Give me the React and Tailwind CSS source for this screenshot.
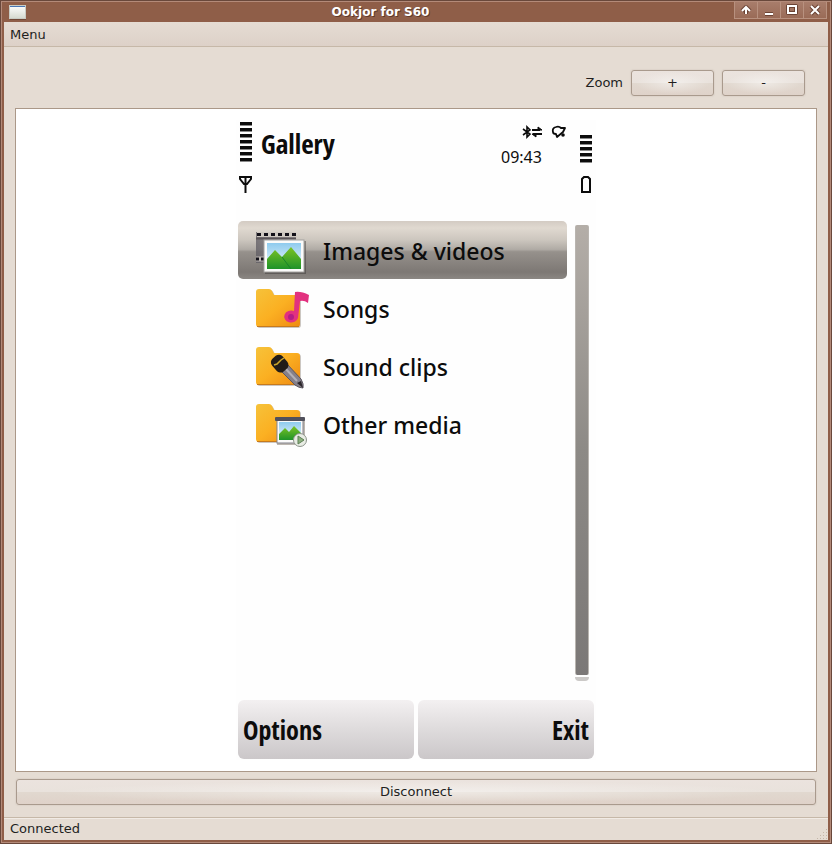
import React from 'react';

const folderTop =
  'M2 8 Q2 5 5 5 H15 Q17 5 18 7 L20 11 H43 Q46 11 46 14 V40 Q46 43 43 43 H5 Q2 43 2 40 Z';

function Gradients() {
  return (
    <svg width="0" height="0" className="absolute" aria-hidden="true">
      <defs>
        <linearGradient id="folder" x1="0" y1="0" x2="1" y2="1">
          <stop offset="0" stopColor="#f6c23a" />
          <stop offset="0.5" stopColor="#fbb022" />
          <stop offset="1" stopColor="#ee8a12" />
        </linearGradient>
        <linearGradient id="sky" x1="0" y1="0" x2="0" y2="1">
          <stop offset="0" stopColor="#8fcbee" />
          <stop offset="1" stopColor="#f2fafc" />
        </linearGradient>
        <linearGradient id="hill" x1="0" y1="0" x2="0" y2="1">
          <stop offset="0" stopColor="#7cc325" />
          <stop offset="1" stopColor="#1f9329" />
        </linearGradient>
        <linearGradient id="film" x1="0" y1="0" x2="1" y2="0">
          <stop offset="0" stopColor="#5d5a61" />
          <stop offset="1" stopColor="#a09a9c" />
        </linearGradient>
        <linearGradient id="pane" x1="0" y1="0" x2="0" y2="1">
          <stop offset="0" stopColor="#ffffff" />
          <stop offset="1" stopColor="#d5d9cf" />
        </linearGradient>
      </defs>
    </svg>
  );
}

function Folder() {
  return (
    <>
      <path d={folderTop} fill="#9a8f86" opacity="0.5" transform="translate(1 1)" />
      <path d={folderTop} fill="url(#folder)" />
      <path d="M3 42.5 H45" stroke="#c77a1c" strokeWidth="1" />
    </>
  );
}

function Icon({ children }) {
  return (
    <svg width="56" height="48" viewBox="0 0 56 48" className="shrink-0" aria-hidden="true">
      {children}
    </svg>
  );
}

function ImagesIcon() {
  return (
    <Icon>
      <rect x="2" y="6" width="40" height="31" fill="url(#film)" opacity="0.75" />
      <path d="M3 8.5 H42" stroke="#cfc9c2" strokeWidth="5" />
      <path d="M3 8.5 H42" stroke="#121018" strokeWidth="3" strokeDasharray="4 3" />
      <path d="M2 12.5 H42" stroke="#5b5558" strokeWidth="2" />
      <path d="M2 33 H10" stroke="#bdb7b2" strokeWidth="5" />
      <path d="M2 33 H10" stroke="#121018" strokeWidth="3" strokeDasharray="3 2" />
      <rect x="11" y="15" width="41" height="33" fill="#3a3735" opacity="0.45" />
      <rect x="10" y="14" width="40" height="32" fill="#fbfbfa" stroke="#a4a29f" strokeWidth="1" />
      <rect x="13" y="17" width="34" height="26" fill="url(#sky)" />
      <path d="M13 33 L21 24 L28 31 L37 21 L47 33 V43 H13 Z" fill="url(#hill)" />
      <path d="M28 31 L31 35 L37 43" stroke="#18832a" strokeWidth="1" fill="none" />
    </Icon>
  );
}

function SongsIcon() {
  return (
    <Icon>
      <Folder />
      <path d="M41 8 Q47 7 55 11 L54 19 Q50 16 46 17 L44 34 A7 6 0 1 1 40 27 Z" fill="#e2317f" />
      <circle cx="37" cy="33" r="3" fill="#b51c86" />
    </Icon>
  );
}

function SoundIcon() {
  return (
    <Icon>
      <Folder />
      <path d="M26 28 L33 22 L47 37 Q50 42 49 46 Q45 46 41 43 Z" fill="#85808a" stroke="#5c5760" strokeWidth="1" />
      <path d="M31 26 L43 39" stroke="#b2afb6" strokeWidth="2" />
      <path d="M43 41 L47 39 L49 46 Z" fill="#2b262b" />
      <g transform="rotate(50 26 22)">
        <rect x="17" y="15" width="17" height="14" rx="5" fill="#211c18" />
      </g>
      <path d="M20 23 L23 22 L27 18 L30 16" stroke="#c9a52b" strokeWidth="1.5" fill="none" />
    </Icon>
  );
}

function MediaIcon() {
  return (
    <Icon>
      <g transform="translate(0 -1)">
        <Folder />
      </g>
      <rect x="23" y="20" width="28" height="25" fill="#7b6f62" opacity="0.5" />
      <rect x="23" y="19" width="26" height="24" fill="#fafafa" stroke="#83838b" strokeWidth="1" />
      <rect x="21" y="17" width="30" height="4" rx="1" fill="#50505c" />
      <rect x="25" y="22" width="22" height="18" fill="url(#sky)" />
      <path d="M25 34 L31 28 L35 32 L40 26 L47 33 V40 H25 Z" fill="url(#hill)" />
      <circle cx="46" cy="40" r="6.5" fill="#e8ece4" stroke="#8d948b" strokeWidth="1" />
      <path d="M44 36 L50 40 L44 44 Z" fill="#8cb07e" stroke="#5d7f54" strokeWidth="1" />
    </Icon>
  );
}

const items = [
  { label: 'Images & videos', Art: ImagesIcon, selected: true },
  { label: 'Songs', Art: SongsIcon },
  { label: 'Sound clips', Art: SoundIcon },
  { label: 'Other media', Art: MediaIcon },
];

function Bars({ count }) {
  return (
    <div className="flex w-3 flex-col gap-[2px]">
      {Array.from({ length: count }, (_, i) => (
        <div key={i} className="h-1 border-b border-[#8a8a8a] bg-[#0c0c0c]" />
      ))}
    </div>
  );
}

function GtkButton({ children, className = '', label }) {
  return (
    <button
      type="button"
      aria-label={label}
      className={
        'flex h-[26px] items-center justify-center rounded-[3px] border border-[#a99a8d] bg-[radial-gradient(ellipse_at_center,rgba(255,255,255,0.45),rgba(255,255,255,0)_65%),linear-gradient(to_bottom,#ebe3de_0%,#e9e2dc_48%,#e1d8cf_52%,#dfd2c9_100%)] shadow-[0_0_1px_1px_#ddd3ca] ' +
        className
      }
    >
      {children}
    </button>
  );
}

function WindowButton({ label, children }) {
  return (
    <button
      type="button"
      aria-label={label}
      className="flex h-[17px] w-[23px] items-center justify-center border-r border-b border-[#b8917f] bg-linear-to-b from-[#a87d6b] to-[#9a6b57]"
    >
      <svg width="14" height="14" viewBox="0 0 14 14" fill="none" aria-hidden="true">
        <g stroke="#6b4334" strokeWidth="4" strokeLinejoin="round">{children}</g>
        <g stroke="#ffffff" strokeWidth="2">{children}</g>
      </svg>
    </button>
  );
}

function TitleBar() {
  return (
    <header className="flex h-5 items-start bg-[#8f5e48]">
      <svg width="18" height="16" viewBox="0 0 18 16" className="mt-[2px] ml-[5px]" aria-hidden="true">
        <rect x="1" y="2" width="16" height="14" fill="#5c3a2c" opacity="0.6" />
        <rect x="0.5" y="1.5" width="16" height="13" fill="url(#pane)" stroke="#c9cbc4" />
        <rect x="1" y="2" width="15" height="1" fill="#4a77b4" />
      </svg>
      <h1 className="flex-1 text-center text-[12px] leading-5 font-bold text-white [text-shadow:1px_1px_0_#60392a]">
        Ookjor for S60
      </h1>
      <div className="mr-px flex border-l border-[#b8917f]">
        <WindowButton label="Shade">
          <path d="M7 11 V5 M3 8 L7 4 L11 8" />
        </WindowButton>
        <WindowButton label="Minimize">
          <path d="M3 11 H11" />
        </WindowButton>
        <WindowButton label="Maximize">
          <path d="M3 3 H11 V10 H3 Z" />
        </WindowButton>
        <WindowButton label="Close">
          <path d="M3 3 L11 11 M11 3 L3 11" />
        </WindowButton>
      </div>
    </header>
  );
}

function PhoneHeader() {
  return (
    <div className="flex h-[101px] items-start text-[#0c0c0c]">
      <div className="flex w-4 flex-col items-center gap-[14px] pt-[2px]">
        <Bars count={7} />
        <svg width="14" height="18" viewBox="0 0 14 18" fill="none" stroke="#0c0c0c" strokeWidth="2" aria-label="Signal">
          <path d="M1 1 H12 V3 L8 8 H5 L1 3 Z M6.5 1 V17" />
        </svg>
      </div>
      <h2 className="flex-1 pt-2 pl-[7px] font-['Open_Sans_Condensed','Noto_Sans_Condensed','Roboto_Condensed','Noto_Sans',sans-serif] text-[27px] leading-8 font-bold">
        Gallery
      </h2>
      <div className="flex flex-col items-end pt-[5px]">
        <svg width="46" height="15" viewBox="0 0 46 15" fill="none" stroke="#0c0c0c" aria-label="Bluetooth and alarm">
          <path d="M3 4 L10 9 L7 12 V2 L10 5 L3 10" strokeWidth="1.6" />
          <path d="M12 5 H20 M13 9 H22" strokeWidth="2" />
          <path d="M18 2 L22 5 H18 Z M16 12 L12 9 H16 Z" fill="#0c0c0c" strokeWidth="1" />
          <path
            d="M33 7 Q32 3 36 2 Q39 1 41 3 L45 3 L43 7 L37 12 L36 9 Q33 9 33 7 Z"
            strokeWidth="1.8"
            strokeLinejoin="round"
          />
          <circle cx="43" cy="10" r="1.8" fill="#0c0c0c" stroke="none" />
        </svg>
        <p className="w-[65px] pt-[5px] text-left font-['Noto_Sans',sans-serif] text-[16px] leading-6">09:43</p>
      </div>
      <div className="flex w-7 flex-col items-end gap-3 pt-[15px] pr-[2px]">
        <Bars count={5} />
        <svg width="12" height="18" viewBox="0 0 12 18" fill="none" stroke="#0c0c0c" strokeWidth="2" aria-label="Battery">
          <path d="M2 17 V4 L4 2 H8 L10 4 V17 Z" />
        </svg>
      </div>
    </div>
  );
}

function Phone() {
  return (
    <section className="flex min-h-[640px] w-[360px] flex-col bg-[#fefefe] px-[2px]">
      <PhoneHeader />
      <div className="flex flex-1 gap-2">
        <ul className="w-[329px]">
          {items.map(({ label, Art, selected }) => (
            <li key={label}>
              <button
                type="button"
                className={
                  selected
                    ? 'flex h-[58px] w-full items-center gap-[13px] rounded-[5px] bg-[linear-gradient(to_bottom,#d3cbc3_0%,#e0d9d0_12%,#cdc7bf_32%,#b0aba5_49%,#96918c_53%,#7d7874_88%,#8b8783_100%)] pl-4'
                    : 'flex h-[58px] w-full items-center gap-[13px] pl-4'
                }
              >
                <Art />
                <span className="pt-px font-['Noto_Sans',sans-serif] text-[23px] leading-8 font-medium text-[#0c0c0c]">
                  {label}
                </span>
              </button>
            </li>
          ))}
        </ul>
        <div className="flex w-[14px] flex-col gap-[2px] pt-1 pb-[19px]">
          <div className="flex-1 rounded-[2px] border-x border-[#b9b5b0] bg-linear-to-b from-[#b4aea8] via-[#8d8a86] to-[#7b7877]" />
          <div className="h-1 rounded-b-sm bg-[#cbc9c7]" />
        </div>
      </div>
      <div className="mb-px grid grid-cols-2 gap-1 font-['Open_Sans_Condensed','Noto_Sans_Condensed','Roboto_Condensed','Noto_Sans',sans-serif] text-[26px] leading-8 font-bold text-[#0c0c0c]">
        <button type="button" className="h-[59px] rounded-md bg-linear-to-b from-[#f3f0f1] via-[#dedbdc] to-[#cbc7c9] px-[5px] text-left">
          Options
        </button>
        <button type="button" className="h-[59px] rounded-md bg-linear-to-b from-[#f3f0f1] via-[#dedbdc] to-[#cbc7c9] px-[5px] text-right">
          Exit
        </button>
      </div>
    </section>
  );
}

function ResizeGrip() {
  return (
    <svg width="12" height="12" viewBox="0 0 12 12" className="self-end" aria-hidden="true">
      <path
        d="M10 1h1v1h-1z M7 4h1v1h-1z M10 4h1v1h-1z M4 7h1v1h-1z M7 7h1v1h-1z M10 7h1v1h-1z M1 10h1v1h-1z M4 10h1v1h-1z M7 10h1v1h-1z M10 10h1v1h-1z"
        fill="#c4b6a8"
      />
    </svg>
  );
}

export default function App() {
  return (
    <div className="min-h-screen border border-[#69483b] bg-[#8f5e48] font-['DejaVu_Sans',sans-serif] text-[13px] text-[#221f1e]">
      <Gradients />
      <div className="flex min-h-[calc(100vh-2px)] flex-col border border-[#b38a79]">
        <div className="flex flex-1 flex-col border-x-2 border-b-2 border-[#8f5e48] bg-[#e5dcd3]">
          <TitleBar />
          <nav className="flex h-[25px] items-center border-b border-[#c6b8a8] bg-linear-to-b from-[#e5dcd3] to-[#ddd1c8] px-[6px]">
            <button type="button" className="pt-px">Menu</button>
          </nav>
          <main className="flex flex-1 flex-col px-[11px]">
            <div className="flex items-center justify-end gap-2 pt-[23px] pr-3 pb-3">
              <span>Zoom</span>
              <GtkButton label="Zoom in" className="w-[83px]">+</GtkButton>
              <GtkButton label="Zoom out" className="w-[83px]">-</GtkButton>
            </div>
            <div className="flex flex-1 items-center justify-center border border-[#ab9888] bg-white py-[11px]">
              <Phone />
            </div>
            <div className="px-px pt-[7px] pb-3">
              <GtkButton className="w-full">Disconnect</GtkButton>
            </div>
          </main>
          <footer className="flex h-[23px] items-center justify-between border-t border-[#c6b8a8] pl-[6px] shadow-[inset_0_1px_0_#f1ebe5]">
            <span>Connected</span>
            <ResizeGrip />
          </footer>
        </div>
      </div>
    </div>
  );
}
